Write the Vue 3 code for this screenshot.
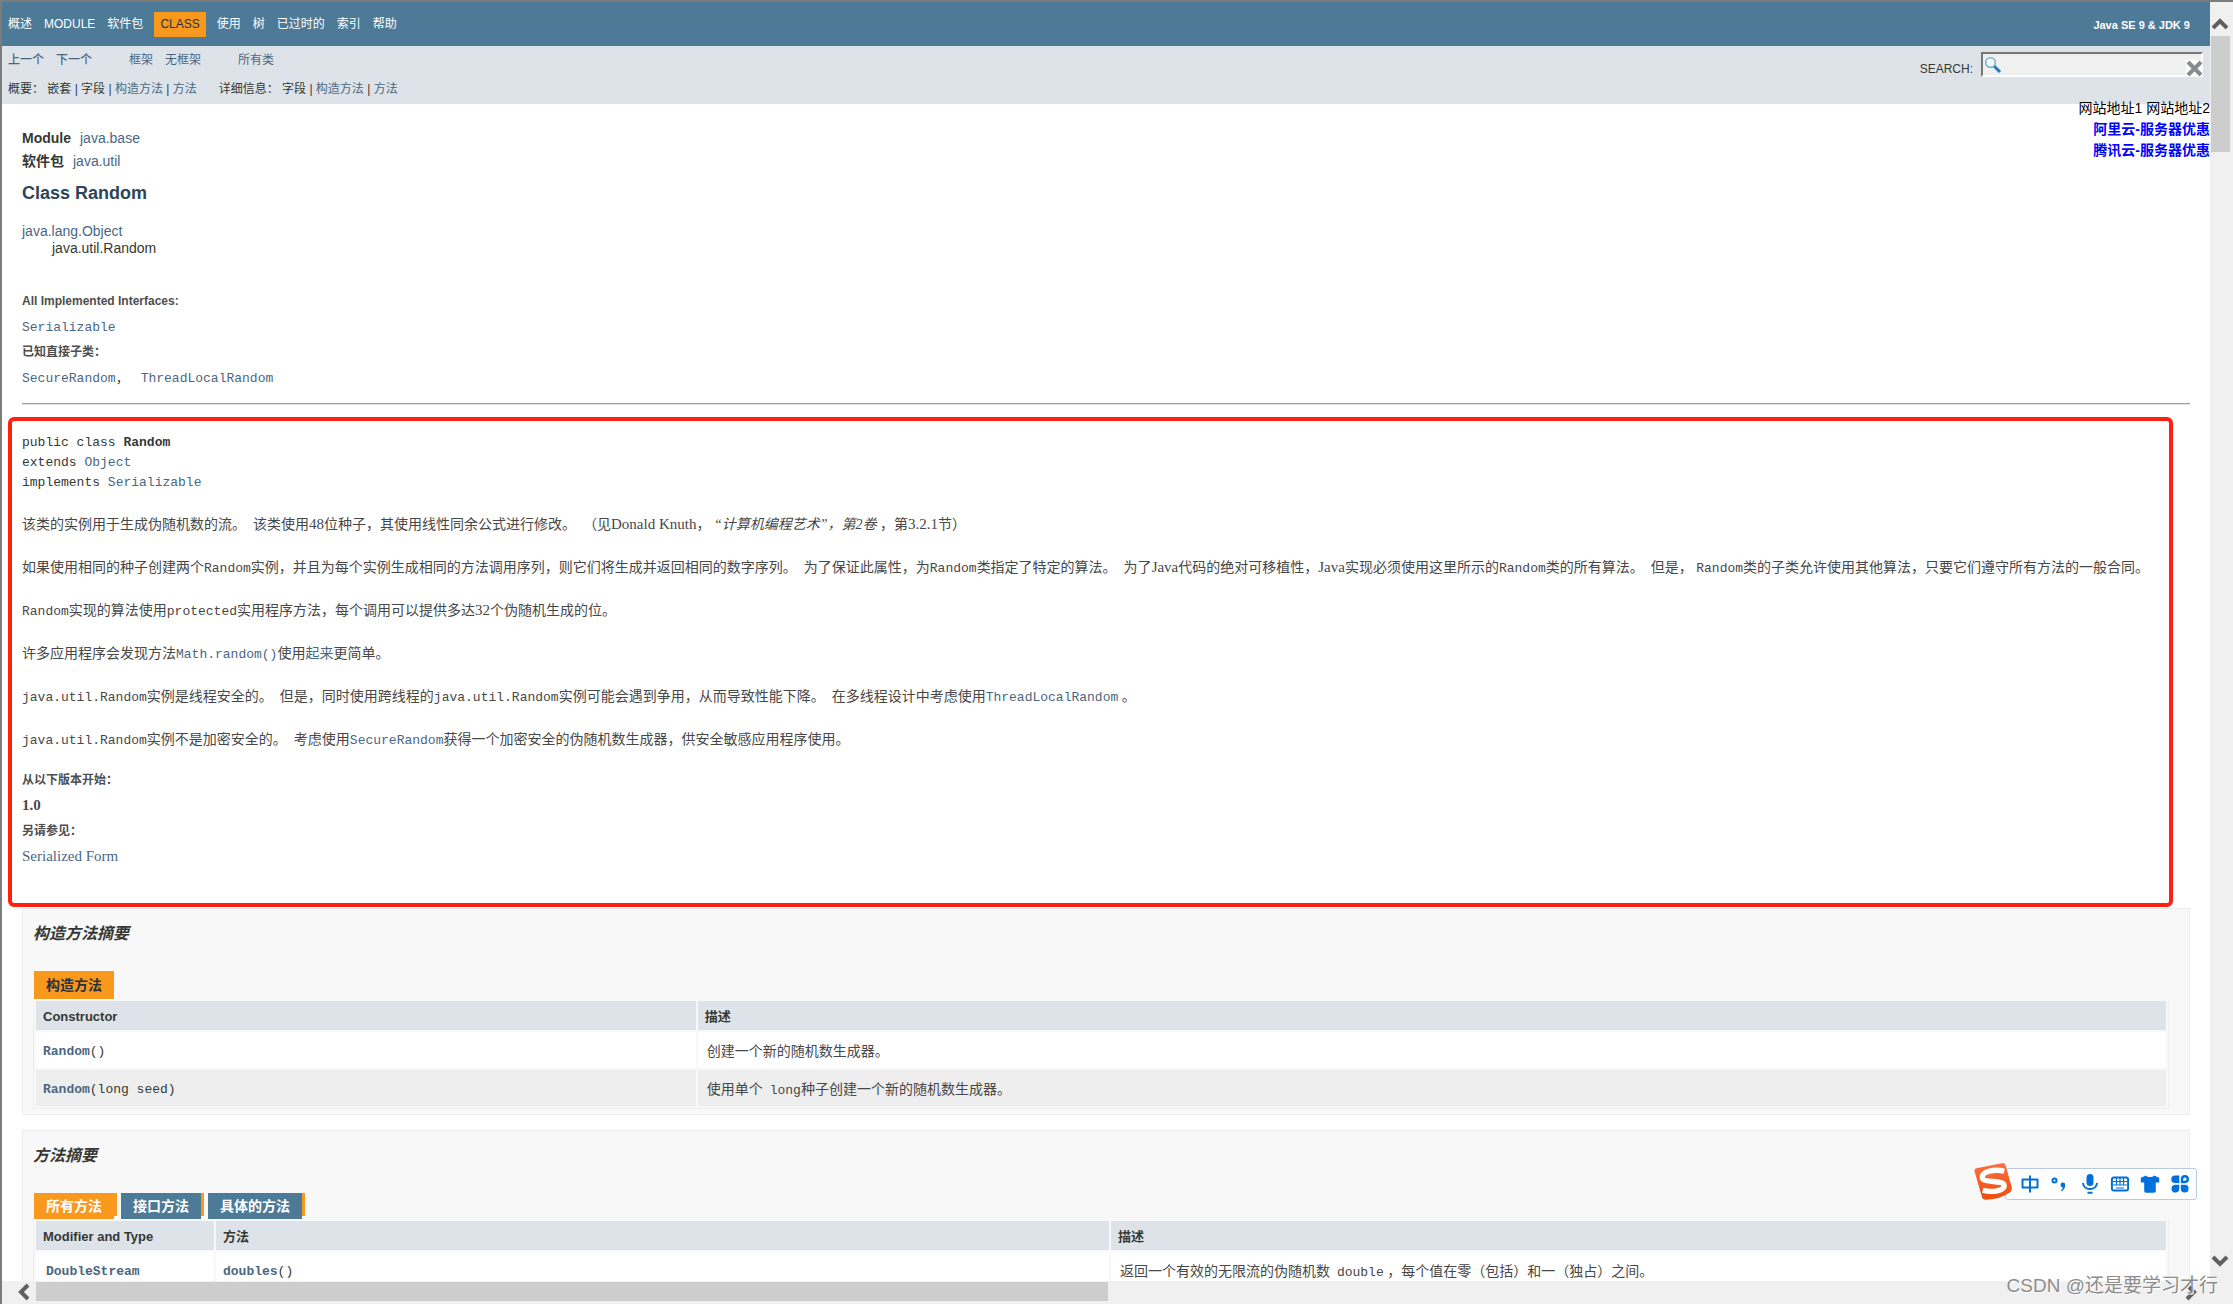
<script setup>
const navItems = ['概述', 'MODULE', '软件包', 'CLASS', '使用', '树', '已过时的', '索引', '帮助']
const constructors = [
  { name: 'Random', args: '()', before: '创建一个新的随机数生成器。', code: '', after: '' },
  { name: 'Random', args: '(long seed)', before: '使用单个\u00a0 ', code: 'long', after: '种子创建一个新的随机数生成器。' },
]
const methodTabs = ['所有方法', '接口方法', '具体的方法']
</script>

<template>
  <div class="window">
    <div class="viewport">
      <header>
        <nav class="top-nav">
          <ul>
            <li v-for="item in navItems" :key="item" :class="{ current: item === 'CLASS' }">
              <span v-if="item === 'CLASS'">{{ item }}</span>
              <a v-else href="#">{{ item }}</a>
            </li>
          </ul>
          <strong class="about">Java SE 9 &amp; JDK 9</strong>
        </nav>
        <div class="sub-nav">
          <div class="sub-links">
            <div class="sub-row">
              <a class="strong" href="#">上一个</a><a class="strong" href="#">下一个</a>
              <a class="apart" href="#">框架</a><a href="#">无框架</a>
              <a class="apart" href="#">所有类</a>
            </div>
            <div class="sub-row tight">
              <span>概要： 嵌套 | 字段 | <a href="#">构造方法</a> | <a href="#">方法</a></span>
              <span>详细信息： 字段 | <a href="#">构造方法</a> | <a href="#">方法</a></span>
            </div>
          </div>
          <form class="search" @submit.prevent>
            <label for="search">SEARCH:</label>
            <div class="field">
              <svg class="glass" viewBox="0 0 18 18" aria-hidden="true">
                <path d="M10 10l6 6" stroke="#1f7fb8" stroke-width="3" />
                <circle cx="6.500" cy="6.500" r="4.800" fill="#f4f8fa" stroke="#6fb0cf" stroke-width="1.500" />
              </svg>
              <input id="search" type="text" />
              <button type="reset" aria-label="清除">
                <svg viewBox="0 0 17 17"><path d="M2 2l13 13M15 2L2 15" stroke="#868b8e" stroke-width="4" /></svg>
              </button>
            </div>
          </form>
        </div>
        <div class="promo">
          <p>网站地址1 网站地址2</p>
          <a href="#">阿里云-服务器优惠</a>
          <a href="#">腾讯云-服务器优惠</a>
        </div>
      </header>

      <main>
        <div class="origin"><b>Module</b><a href="#">java.base</a></div>
        <div class="origin"><b>软件包</b><a href="#">java.util</a></div>
        <h1>Class Random</h1>
        <ul class="inheritance">
          <li><a href="#">java.lang.Object</a></li>
          <li class="child">java.util.Random</li>
        </ul>

        <dl class="facts">
          <dt>All Implemented Interfaces:</dt>
          <dd><code><a href="#">Serializable</a></code></dd>
          <dt>已知直接子类：</dt>
          <dd><code><a href="#">SecureRandom</a><span class="comma">，</span><a href="#">ThreadLocalRandom</a></code></dd>
        </dl>
        <hr />

        <section class="description">
          <pre>public class <b>Random</b>
extends <a href="#">Object</a>
implements <a href="#">Serializable</a></pre>
          <p>该类的实例用于生成伪随机数的流。&nbsp; 该类使用<span class="latin">48</span>位种子，其使用线性同余公式进行修改。&nbsp; （见<span class="latin">Donald Knuth</span>， <i>“计算机编程艺术”，第2卷</i> ，第<span class="latin">3.2.1</span>节）</p>
          <p>如果使用相同的种子创建两个<code>Random</code>实例，并且为每个实例生成相同的方法调用序列，则它们将生成并返回相同的数字序列。&nbsp; 为了保证此属性，为<code>Random</code>类指定了特定的算法。&nbsp; 为了<span class="latin">Java</span>代码的绝对可移植性，<span class="latin">Java</span>实现必须使用这里所示的<code>Random</code>类的所有算法。&nbsp; 但是， <code>Random</code>类的子类允许使用其他算法，只要它们遵守所有方法的一般合同。</p>
          <p><code>Random</code>实现的算法使用<code>protected</code>实用程序方法，每个调用可以提供多达<span class="latin">32</span>个伪随机生成的位。</p>
          <p>许多应用程序会发现方法<code><a href="#">Math.random()</a></code>使用<a href="#">起来</a>更简单。</p>
          <p><code>java.util.Random</code>实例是线程安全的。&nbsp; 但是，同时使用跨线程的<code>java.util.Random</code>实例可能会遇到争用，从而导致性能下降。&nbsp; 在多线程设计中考虑使用<code><a href="#">ThreadLocalRandom</a></code> 。</p>
          <p><code>java.util.Random</code>实例不是加密安全的。&nbsp; 考虑使用<code><a href="#">SecureRandom</a></code>获得一个加密安全的伪随机数生成器，供安全敏感应用程序使用。</p>
          <dl class="facts">
            <dt>从以下版本开始：</dt>
            <dd class="latin"><b>1.0</b></dd>
            <dt>另请参见：</dt>
            <dd class="latin"><a href="#">Serialized Form</a></dd>
          </dl>
        </section>

        <section class="summary">
          <h2>构造方法摘要</h2>
          <div class="caption">构造方法</div>
          <table>
            <colgroup><col class="w-ctor" /><col /></colgroup>
            <thead><tr><th>Constructor</th><th>描述</th></tr></thead>
            <tbody>
              <tr v-for="c in constructors" :key="c.args">
                <td><code><a href="#"><b>{{ c.name }}</b></a>{{ c.args }}</code></td>
                <td class="text">{{ c.before }}<code v-if="c.code">{{ c.code }}</code>{{ c.after }}</td>
              </tr>
            </tbody>
          </table>
        </section>

        <section class="summary">
          <h2>方法摘要</h2>
          <div class="tabs">
            <button v-for="(t, i) in methodTabs" :key="t" type="button" :class="{ active: i === 0 }"><span>{{ t }}</span></button>
          </div>
          <table>
            <colgroup><col class="w-type" /><col class="w-method" /><col /></colgroup>
            <thead><tr><th>Modifier and Type</th><th>方法</th><th>描述</th></tr></thead>
            <tbody>
              <tr>
                <td class="type"><code><a href="#"><b>DoubleStream</b></a></code></td>
                <td><code><a href="#"><b>doubles</b></a>()</code></td>
                <td class="text">返回一个有效的无限流的伪随机数&nbsp; <code>double</code> ，每个值在零（包括）和一（独占）之间。</td>
              </tr>
            </tbody>
          </table>
        </section>
      </main>
    </div>

    <div class="v-bar" aria-hidden="true">
      <svg viewBox="0 0 18 12"><path d="M2 10l7-7 7 7" /></svg>
      <div class="thumb"></div>
      <svg viewBox="0 0 18 12"><path d="M2 2l7 7 7-7" /></svg>
    </div>
    <div class="h-bar" aria-hidden="true">
      <svg viewBox="0 0 12 18"><path d="M10 2L3 9l7 7" /></svg>
      <div class="track"><div class="thumb"></div></div>
      <svg viewBox="0 0 12 18"><path d="M2 2l7 7-7 7" /></svg>
    </div>

    <div class="ime">
      <svg class="logo" viewBox="0 0 40 40" aria-hidden="true">
        <defs><linearGradient id="flame" x1="0" y1="0" x2="0" y2="1"><stop offset="0" stop-color="#fb7040" /><stop offset="1" stop-color="#f04c0e" /></linearGradient></defs>
        <path d="M3 6.500L29 1.200Q32 .6 33 3.500L39.300 26Q40 29 37.500 31Q28 38 13 38.800Q9.500 39 8.700 36L1.200 10Q.4 7.200 3 6.500z" fill="url(#flame)" />
        <path d="M31.500 9.500C22 7 8.500 9.500 9 16c.5 6 22 2 22.500 8C32 29.500 19 31.500 9.500 29" fill="none" stroke="#fff" stroke-width="5.500" />
      </svg>
      <div class="ime-icons">
        <svg viewBox="0 0 20 20"><path d="M2.500 5.500h15v8h-15zM10 1.500v17" fill="none" stroke="#0071dc" stroke-width="2" stroke-linejoin="round" /></svg>
        <svg viewBox="0 0 20 20"><circle cx="4.500" cy="6.500" r="2" fill="none" stroke="#0071dc" stroke-width="2" /><path d="M10.500 11a2.400 2.400 0 1 1 4.800 0c0 3-1.600 5-3.800 6.300l-.7-1c1.300-1 1.900-1.700 2-2.900A2.400 2.400 0 0 1 10.500 11z" fill="#0071dc" /></svg>
        <svg viewBox="0 0 20 20"><rect x="6.500" y="0" width="7" height="12" rx="3.500" fill="#0071dc" /><path d="M3 9c.5 8 13.500 8 14 0M7.500 18.800h5" fill="none" stroke="#0071dc" stroke-width="2" /></svg>
        <svg viewBox="0 0 20 20"><rect x="1.900" y="3.400" width="16.200" height="13.200" rx="2" fill="none" stroke="#0071dc" stroke-width="2" /><path d="M3 7.500h14M3 11h14M6.500 4v7M10 4v7M13.500 4v7M6 14h8" stroke="#0071dc" stroke-width="1.200" /></svg>
        <svg viewBox="0 0 20 20"><path d="M6 1.500c1.500 2 6.500 2 8 0l5.200 2.300v4.700h-3.400V17q0 1.800-1.800 1.800H6Q4.200 18.800 4.200 17V8.500H.8V3.800z" fill="#0071dc" /></svg>
        <svg viewBox="0 0 20 20"><path d="M5 1.500h4.300V9H5a3.700 3.700 0 0 1 0-7.500zM5 10.800h4.300v4a3.900 3.900 0 1 1-4.300-4zM10.800 10.800h4a3.900 3.900 0 1 1-4 4z" fill="#0071dc" /><path d="M12 8V5a2.900 2.900 0 1 1 3 3z" fill="none" stroke="#0071dc" stroke-width="2.400" /></svg>
      </div>
    </div>
    <div class="watermark">CSDN @还是要学习才行</div>
  </div>
</template>

<style>
body { margin: 0; overflow: hidden; }
</style>

<style scoped>
* { box-sizing: border-box; }
.window {
  position: relative;
  display: grid;
  grid-template-columns: minmax(0, 1fr) 23px;
  grid-template-rows: minmax(0, 1fr) 23px;
  height: 100vh;
  border-top: 2px solid #7c7c7c;
  border-left: 2px solid #7c7c7c;
  background: #fff;
  color: #353833;
  font-family: "Liberation Sans", "Noto Sans CJK SC", sans-serif;
  font-size: 14px;
}
.viewport { position: relative; overflow: hidden; }
a { color: #4a6782; text-decoration: none; }
ul, dl, dd, p, pre, h1, h2 { margin: 0; padding: 0; }
ul { list-style: none; }
code, pre { font-family: "Liberation Mono", "Noto Sans CJK SC", monospace; font-size: 13px; }
code { line-height: 1; }

.top-nav {
  display: flex;
  align-items: center;
  justify-content: space-between;
  height: 44px;
  padding: 1px 20px 0 0;
  background: #4d7a97;
  color: #fff;
  font-size: 12px;
}
.top-nav ul { display: flex; line-height: 25px; }
.top-nav li { padding: 0 6px; }
.top-nav a { color: #fff; }
.top-nav .current { margin: 0 5px; background: #f8981d; color: #253441; }
.about { font-size: 11px; }

.sub-nav {
  display: flex;
  justify-content: space-between;
  height: 58px;
  padding: 0 7px 0 6px;
  background: #dee3e9;
  font-size: 12px;
}
.sub-row { display: flex; gap: 12px; line-height: 28px; }
.tight { gap: 22px; line-height: 30px; }
.sub-row .apart { margin-left: 25px; }
.strong { font-weight: 500; }
.search { display: flex; align-items: flex-start; gap: 8px; padding-top: 6px; }
.search label { line-height: 34px; }
.field { position: relative; width: 222px; height: 25px; }
.field input {
  width: 100%;
  height: 100%;
  padding: 0 20px 0 22px;
  border: 2px solid;
  border-color: #767676 #fff #fff #767676;
  background: #f0f0f0;
}
.glass { position: absolute; left: 3px; top: 4px; width: 18px; height: 18px; }
.field button {
  position: absolute;
  right: 0;
  bottom: 0;
  width: 17px;
  height: 17px;
  padding: 0;
  border: 0;
  background: #fff;
}
.field button svg { display: block; width: 17px; height: 17px; }
.promo {
  position: absolute;
  top: 96px;
  right: 0;
  color: #000;
  line-height: 21px;
  text-align: right;
}
.promo a { display: block; color: #00f; font-weight: bold; }

main { padding: 23px 20px 0; }
.origin { display: flex; gap: 9px; line-height: 23px; }
h1 { margin-top: 8px; color: #2c4557; font-size: 18px; line-height: 24px; }
.inheritance { margin-top: 18px; line-height: 17px; }
.child { padding-left: 30px; }
.inheritance + .facts { margin-top: 31px; }
.facts dt { color: #4e4e4e; font-size: 12px; font-weight: bold; line-height: 26px; }
.facts dd { height: 25px; line-height: 24px; }
.comma { margin-right: 12px; color: #353833; }
hr { margin: 13px 0 0; border: 0; border-top: 1px solid #a0a0a0; border-bottom: 1px solid #e3e3e3; }

.description { position: relative; margin-bottom: 39px; padding-top: 28px; color: #474747; font-family: "Liberation Serif", "Noto Sans CJK SC", serif; }
.description::before {
  content: "";
  position: absolute;
  inset: 12px 17px -38px -14px;
  border: 4px solid #ff2010;
  border-radius: 6px;
  pointer-events: none;
}
.description pre { margin-bottom: 22px; color: #353833; line-height: 20px; }
.description p { height: 21px; margin-bottom: 22px; line-height: 20px; white-space: nowrap; }
.description p:last-of-type { margin-bottom: 16px; }
.description dt { font-family: "Liberation Sans", "Noto Sans CJK SC", sans-serif; }
.latin { font-size: 15px; line-height: 1; }

.summary { margin-bottom: 15px; padding: 0 20px 5px 10px; border: 1px solid #ededed; background: #f8f8f8; }
h2 { padding: 13px 0 25px; font-size: 16px; font-style: italic; line-height: 24px; }
.caption {
  width: max-content;
  margin-left: 1px;
  padding: 0 12px;
  background: #f8981d;
  color: #253441;
  font-weight: bold;
  line-height: 28px;
}
.tabs { display: flex; gap: 4px; margin-left: 1px; }
.tabs button {
  height: 26px;
  padding: 0 3px 0 0;
  border: 0;
  background: linear-gradient(#f8981d, #f8981d) 0 0 / 100% 23px no-repeat;
  color: #fff;
  font: inherit;
  font-weight: bold;
}
.tabs span { display: block; padding: 0 12px; background: #4d7a97; line-height: 26px; }
.tabs .active span { background: #f8981d; }
table {
  width: 100%;
  border: 1px solid #eee;
  border-top: 0;
  border-collapse: separate;
  border-spacing: 2px;
  table-layout: fixed;
}
.w-ctor { width: 31%; }
.w-type { width: 178px; }
.w-method { width: 42%; }
th { height: 29px; padding: 2px 7px 0; background: #dee3e9; font-size: 13px; line-height: 20px; text-align: left; }
td { height: 36px; padding: 0 7px; background: #fff; line-height: 20px; }
td.text { padding: 3px 9px 0; color: #474747; font-family: "Liberation Serif", "Noto Sans CJK SC", serif; }
td.type { padding-left: 10px; }
tr:nth-child(even) td { background: #eeeeef; }

.v-bar { display: flex; flex-direction: column; align-items: center; padding: 16px 3px 14px 0; background: #f0f0f0; }
.v-bar svg, .h-bar svg { flex: none; fill: none; stroke: #606060; stroke-width: 4; }
.v-bar svg { width: 18px; height: 12px; }
.v-bar .thumb { width: 19px; height: 116px; margin: 6px 0 auto; background: #cdcdcd; }
.h-bar { grid-column: 1 / 3; display: flex; align-items: center; padding: 0 36px 2px 16px; background: #f0f0f0; }
.h-bar svg { width: 12px; height: 18px; }
.track { flex: 1; margin: 0 6px; }
.h-bar .thumb { width: 50%; height: 19px; background: #cdcdcd; }

.ime { position: absolute; right: 36px; bottom: 104px; display: flex; align-items: center; }
.logo { position: absolute; left: -32px; top: -6px; z-index: 1; width: 40px; height: 39px; }
.ime-icons {
  display: flex;
  align-items: center;
  gap: 10px;
  height: 32px;
  padding: 0 6px 0 14px;
  border: 1px solid #b8cbe2;
  border-radius: 3px;
  background: #fff;
}
.ime-icons svg { width: 20px; height: 20px; }
.watermark {
  position: absolute;
  right: 15px;
  bottom: 3px;
  color: #8d8d8d;
  font-size: 19px;
  line-height: 30px;
  text-shadow: 1px 1px #fff;
}
</style>
